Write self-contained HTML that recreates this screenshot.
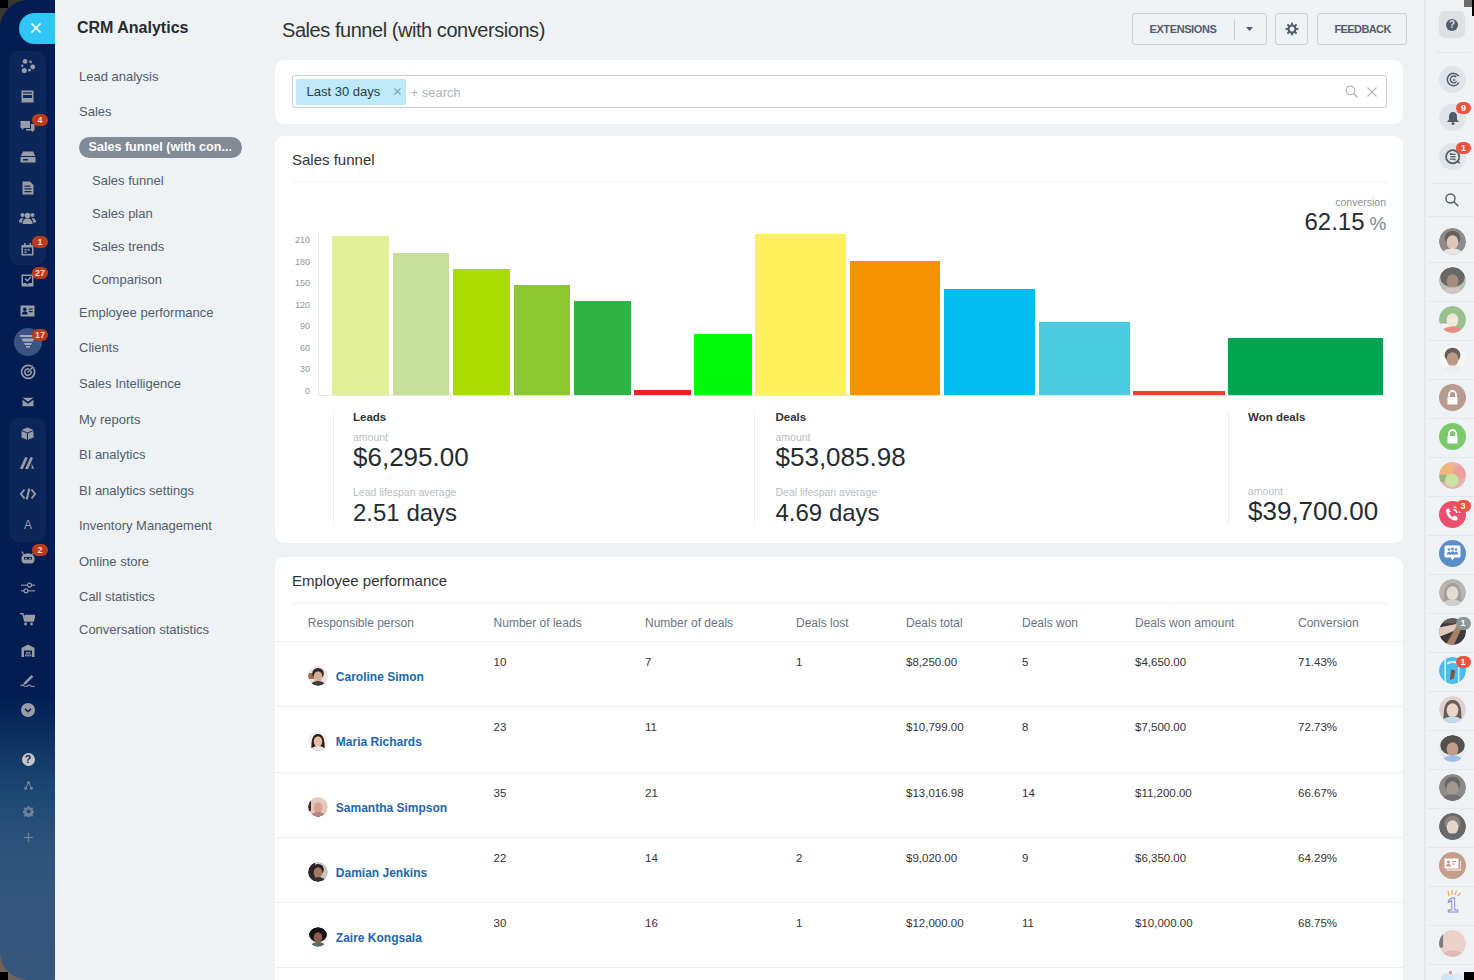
<!DOCTYPE html>
<html><head><meta charset="utf-8">
<style>
*{box-sizing:border-box;margin:0;padding:0}
html,body{width:1474px;height:980px;overflow:hidden;background:#eef2f4;font-family:"Liberation Sans",sans-serif;color:#333}
.a{position:absolute;white-space:nowrap}
.mi{position:absolute;left:79px;font-size:13px;color:#535c69;white-space:nowrap;line-height:15px}
.card{position:absolute;left:275px;width:1128px;background:#fff;border-radius:9px}
.badge{position:absolute;height:12px;min-width:15px;padding:0 3px;border-radius:6px;background:#bb3b1c;color:#f0d8cc;font-size:9px;font-weight:bold;line-height:12px;text-align:center}
.ic{position:absolute}
.th{position:absolute;top:616px;font-size:12px;color:#6a737f;line-height:14px;white-space:nowrap}
.td{position:absolute;font-size:11.5px;color:#333;line-height:14px;white-space:nowrap}
.nm{position:absolute;font-size:12px;font-weight:bold;color:#2067b0;line-height:14px;white-space:nowrap}
.av{position:absolute;border-radius:50%;overflow:hidden}
.rl{position:absolute;left:275px;width:1128px;height:1px;background:#edf0f2}
.yl{position:absolute;left:280px;width:30px;text-align:right;font-size:9px;color:#8f959c;line-height:10px}
.bar{position:absolute}
.ra{position:absolute;left:1439px;width:27px;height:27px;border-radius:50%;overflow:hidden}
.rd{position:absolute;left:1427.5px;width:46.5px;height:1px;background:#e3e7ea}
</style></head><body>

<div class="a" style="left:0;top:0;width:40px;height:40px;background:#3b3631"></div>
<div class="a" style="left:0;top:0;width:8px;height:8px;background:#000"></div>
<div class="a" style="left:0;top:940px;width:40px;height:40px;background:#6e6458"></div>
<div class="a" style="left:0;top:972px;width:8px;height:8px;background:#000"></div>
<div class="a" style="left:0;top:0;width:55px;height:980px;border-radius:28px 0 0 28px;background:linear-gradient(180deg,#031d52 0%,#031d52 71%,#0f3464 76%,#1c4874 81%,#2b527c 86%,#34557e 91%,#37567e 100%)"></div>
<div class="a" style="left:9px;top:51px;width:37px;height:214px;border-radius:11px;background:rgba(255,255,255,0.045)"></div>
<div class="a" style="left:9px;top:418px;width:37px;height:124px;border-radius:11px;background:rgba(255,255,255,0.045)"></div>
<div class="a" style="left:19px;top:13px;width:36px;height:31px;border-radius:16px 0 0 16px;background:#2fc6f6"></div>
<svg class="ic" style="left:30px;top:22px" width="12" height="12" viewBox="0 0 12 12"><path d="M1.5 1.5L10.5 10.5M10.5 1.5L1.5 10.5" stroke="#fff" stroke-width="1.6"/></svg>
<div class="a" style="left:13.5px;top:327.5px;width:28px;height:28px;border-radius:50%;background:#3b5382"></div>
<svg class="ic" style="left:19.5px;top:58px" width="16" height="16" viewBox="0 0 16 16" fill="#979ca6"><circle cx="5.1" cy="3.4" r="2.4"/><circle cx="12.7" cy="9" r="2.4"/><circle cx="4.3" cy="12.4" r="2.5"/><ellipse cx="10.5" cy="3.8" rx="1.5" ry="1.2" transform="rotate(35 10.5 3.8)"/><ellipse cx="2.3" cy="7.8" rx="1" ry="1.4"/><circle cx="9.4" cy="12.2" r="1.4"/></svg>
<svg class="ic" style="left:21.0px;top:89.5px" width="13" height="13" viewBox="0 0 13 13" fill="#979ca6" stroke="none"><path d="M0.5 0.5h12v12h-12z M2 2.2h9v1.4h-9z M2 5h9v3h-9z" fill-rule="evenodd"/></svg>
<svg class="ic" style="left:20.0px;top:120.0px" width="15" height="14" viewBox="0 0 15 14" fill="#979ca6" stroke="none"><path d="M0.5 1h9.5v7h-6l-2.2 2v-2h-1.3z"/><path d="M11 4h3.5v6.5h-1.2v2l-2.2-2h-5v-1.5h5z"/></svg>
<svg class="ic" style="left:19.5px;top:151.0px" width="16" height="12" viewBox="0 0 16 12" fill="#979ca6" stroke="none"><path d="M3 0.5h10l2.2 4.5h-14.4z"/><path d="M0.5 6h15v5.5h-15z M3 8h5v1.5h-5z" fill-rule="evenodd"/></svg>
<svg class="ic" style="left:21.5px;top:181.0px" width="12" height="14" viewBox="0 0 12 14" fill="#979ca6" stroke="none"><path d="M0.5 0.5h7.5l3.5 3.5v9.5h-11z M2.5 4.5h6v1.3h-6z M2.5 7.2h7v1.3h-7z M2.5 9.9h7v1.3h-7z" fill-rule="evenodd"/></svg>
<svg class="ic" style="left:19.0px;top:212.0px" width="17" height="12" viewBox="0 0 17 12" fill="#979ca6" stroke="none"><circle cx="8.5" cy="3.5" r="2.8"/><path d="M3.5 12c0-3.5 2-5.5 5-5.5s5 2 5 5.5z"/><circle cx="3.5" cy="3" r="2"/><path d="M0 10.5c0-3 1.3-4.5 3.5-4.5l1 0.3c-1 1-1.5 2.5-1.5 4.2z"/><circle cx="13.5" cy="3" r="2"/><path d="M17 10.5c0-3-1.3-4.5-3.5-4.5l-1 0.3c1 1 1.5 2.5 1.5 4.2z"/></svg>
<svg class="ic" style="left:21.0px;top:242.5px" width="13" height="13" viewBox="0 0 13 13" fill="#979ca6" stroke="none"><path d="M0.5 2h12v10.5h-12z M2 4.5h9v6.5h-9z" fill-rule="evenodd"/><rect x="3" y="0" width="1.5" height="3"/><rect x="8.5" y="0" width="1.5" height="3"/><rect x="3.5" y="6" width="2" height="1.5"/><rect x="6.5" y="6" width="2" height="1.5"/><rect x="3.5" y="8.5" width="2" height="1.5"/></svg>
<svg class="ic" style="left:21.0px;top:273.5px" width="13" height="13" viewBox="0 0 13 13" fill="#979ca6" stroke="none"><path d="M0.5 0.5h12v12h-12z M2 2h9v7h-3l-1.5 1.5l-1.5-1.5h-3z" fill-rule="evenodd"/><path d="M3.5 5l1 -1l1.8 1.8l3.2-3.2l1 1l-4.2 4.2z"/></svg>
<svg class="ic" style="left:20.0px;top:305.0px" width="15" height="12" viewBox="0 0 15 12" fill="#979ca6" stroke="none"><path d="M0.5 0.5h14v11h-14z"/><circle cx="4.8" cy="4.3" r="1.8" fill="#031d52"/><path d="M2 9.5c0-2.2 1.2-3.2 2.8-3.2s2.8 1 2.8 3.2z" fill="#031d52"/><rect x="8.8" y="3.5" width="3.8" height="1.2" fill="#031d52"/><rect x="8.8" y="6" width="3.8" height="1.2" fill="#031d52"/></svg>
<svg class="ic" style="left:19.5px;top:335px" width="16" height="13" viewBox="0 0 16 13" fill="#a3abbb"><rect x="0" y="0" width="16" height="2"/><path d="M1.5 3.5h13l-1.5 3h-10z"/><path d="M4 8h8l-1 2h-6z"/><rect x="6" y="11" width="4" height="1.6"/></svg>
<svg class="ic" style="left:19.5px;top:364.0px" width="16" height="16" viewBox="0 0 16 16" fill="#979ca6" stroke="none"><path d="M11.2 2.2A6.5 6.5 0 1 0 13.8 4.8" fill="none" stroke="#979ca6" stroke-width="1.7"/><path d="M9.2 5.1A3.2 3.2 0 1 0 10.9 6.8" fill="none" stroke="#979ca6" stroke-width="1.6"/><path d="M7.5 8.5l5.5-5.5" stroke="#979ca6" stroke-width="1.5"/><path d="M11.5 1l1 0l0.3 2.2l2.2 0.3v1l-2.5 0l-1-1z"/></svg>
<svg class="ic" style="left:21.5px;top:397.4px" width="12" height="10" viewBox="0 0 12 10" fill="#979ca6" stroke="none"><path d="M0.5 0.8h11l-5.5 4z"/><path d="M0.5 2.8l5.5 4l5.5-4v6.5h-11z"/></svg>
<svg class="ic" style="left:21.0px;top:426.5px" width="13" height="13" viewBox="0 0 13 13" fill="#979ca6" stroke="none"><path d="M6.5 0.5l6 2.5l-6 2.5l-6-2.5z"/><path d="M0.5 4l5.5 2.3v6.5l-5.5-2.3z"/><path d="M12.5 4l-5.5 2.3v6.5l5.5-2.3z"/></svg>
<svg class="ic" style="left:19.5px;top:457.0px" width="16" height="12" viewBox="0 0 16 12" fill="#979ca6" stroke="none"><path d="M1.5 11.5l4.5-10" stroke="#979ca6" stroke-width="2.8" stroke-linecap="round"/><path d="M6.8 11.5l4.5-10" stroke="#979ca6" stroke-width="2.8" stroke-linecap="round"/><path d="M11.6 6.5l2.6 5.2h-2.6z"/></svg>
<svg class="ic" style="left:19.5px;top:488.0px" width="16" height="12" viewBox="0 0 16 12" fill="#979ca6" stroke="none"><path d="M4.5 1.5l-3.6 4.5l3.6 4.5" stroke="#979ca6" stroke-width="2" fill="none"/><path d="M11.5 1.5l3.6 4.5l-3.6 4.5" stroke="#979ca6" stroke-width="2" fill="none"/><path d="M9.3 0.5l-2.6 11" stroke="#979ca6" stroke-width="2"/></svg>
<div class="a" style="left:21px;top:518px;width:14px;text-align:center;font-size:12px;color:#979ca6;line-height:14px">A</div>
<svg class="ic" style="left:19.5px;top:550.5px" width="16" height="13" viewBox="0 0 16 13" fill="#979ca6" stroke="none"><path d="M1.5 7.5c0-3.5 2.7-5 6.5-5s6.5 1.5 6.5 5v1.5c0 2-1.3 3.5-3.5 3.5h-6c-2.2 0-3.5-1.5-3.5-3.5z M4 6h8v2.6h-8z" fill-rule="evenodd"/><path d="M3.5 3.5l-1.5-3M12.5 3.5l1.5-3" stroke="#979ca6" stroke-width="1.2"/><circle cx="6" cy="7.3" r="0.9"/><circle cx="10" cy="7.3" r="0.9"/></svg>
<svg class="ic" style="left:20.5px;top:582.0px" width="14" height="12" viewBox="0 0 14 12" fill="#979ca6" stroke="none"><rect x="0" y="2.6" width="14" height="1.1"/><rect x="0" y="8.3" width="14" height="1.1"/><circle cx="8.5" cy="3.1" r="2" fill="#031d52" stroke="#979ca6" stroke-width="1.2"/><circle cx="5" cy="8.8" r="2" fill="#031d52" stroke="#979ca6" stroke-width="1.2"/></svg>
<svg class="ic" style="left:20.0px;top:612.5px" width="15" height="13" viewBox="0 0 15 13" fill="#979ca6" stroke="none"><path d="M0 0.5h2.8l2 7.5h8.5l1.5-5.5h-10" fill="none" stroke="#979ca6" stroke-width="1.4"/><path d="M4 2.5h10.5l-1.5 5.5h-8.5z"/><circle cx="5.5" cy="11" r="1.4"/><circle cx="11.5" cy="11" r="1.4"/></svg>
<svg class="ic" style="left:20.5px;top:643.5px" width="14" height="13" viewBox="0 0 14 13" fill="#979ca6" stroke="none"><path d="M7 0.5l6.5 3.5v9h-2.5v-6.5h-8v6.5h-2.5v-9z"/><rect x="5" y="8" width="1.8" height="1.8"/><rect x="7.5" y="8" width="1.8" height="1.8"/><rect x="6.2" y="10.5" width="1.8" height="1.8"/><rect x="4" y="10.5" width="1.8" height="1.8"/><rect x="8.5" y="10.5" width="1.8" height="1.8"/></svg>
<svg class="ic" style="left:20.0px;top:673.0px" width="15" height="14" viewBox="0 0 15 14" fill="#979ca6" stroke="none"><path d="M4 9.5l7.5-7.5l1.8 1.8l-7.5 7.5l-2.5 0.7z"/><path d="M0.5 13c1.5-1.5 2.5-1.5 3.5 0s2 1.5 3.5 0s2-1.5 3.5 0s2 1 3.5 0" stroke="#979ca6" stroke-width="1.1" fill="none"/></svg>
<svg class="ic" style="left:20.5px;top:703.0px" width="14" height="14" viewBox="0 0 14 14" fill="#979ca6" stroke="none"><circle cx="7" cy="7" r="7"/><path d="M4 5.8l3 3l3-3" stroke="#031d52" stroke-width="1.5" fill="none"/></svg>
<svg class="ic" style="left:21.5px;top:752.5px" width="13" height="13" viewBox="0 0 13 13"><circle cx="6.5" cy="6.5" r="6.5" fill="#c3c5cb"/></svg>
<div class="a" style="left:21.5px;top:753px;width:13px;text-align:center;font-size:10.5px;font-weight:bold;color:#10284f;line-height:12px">?</div>
<svg class="ic" style="left:23.5px;top:781px;opacity:0.75" width="9" height="9" viewBox="0 0 9 9" fill="#979ca6"><circle cx="4.5" cy="1.6" r="1.5"/><circle cx="1.6" cy="7.2" r="1.5"/><circle cx="7.4" cy="7.2" r="1.5"/><path d="M4.5 1.6l-2.9 5.6M4.5 1.6l2.9 5.6" stroke="#979ca6" stroke-width="0.9"/></svg>
<svg class="ic" style="left:22.5px;top:805.5px;opacity:0.65" width="11" height="11" viewBox="0 0 13 13" fill="#979ca6"><path fill-rule="evenodd" d="M5.5 0h2l0.4 1.8l1.3 0.6l1.6-1l1.4 1.4l-1 1.6l0.6 1.3l1.8 0.4v2l-1.8 0.4l-0.6 1.3l1 1.6l-1.4 1.4l-1.6-1l-1.3 0.6l-0.4 1.8h-2l-0.4-1.8l-1.3-0.6l-1.6 1l-1.4-1.4l1-1.6l-0.6-1.3l-1.8-0.4v-2l1.8-0.4l0.6-1.3l-1-1.6l1.4-1.4l1.6 1l1.3-0.6z M6.5 4a2.5 2.5 0 1 0 0.01 0z"/></svg>
<svg class="ic" style="left:23.5px;top:832.5px;opacity:0.65" width="9" height="9" viewBox="0 0 9 9" fill="#979ca6"><rect x="3.85" y="0" width="1.3" height="9"/><rect x="0" y="3.85" width="9" height="1.3"/></svg>
<div class="badge" style="left:32px;top:114px;width:16px">4</div>
<div class="badge" style="left:32px;top:236px;width:16px">1</div>
<div class="badge" style="left:32px;top:267px;width:16px">27</div>
<div class="badge" style="left:32px;top:329px;width:16px">17</div>
<div class="badge" style="left:32px;top:544px;width:16px">2</div>
<div class="a" style="left:77px;top:18px;font-size:16px;font-weight:bold;color:#262b30;line-height:20px">CRM Analytics</div>
<div class="mi" style="left:79px;top:69px">Lead analysis</div>
<div class="mi" style="left:79px;top:104px">Sales</div>
<div class="mi" style="left:92px;top:173px">Sales funnel</div>
<div class="mi" style="left:92px;top:206px">Sales plan</div>
<div class="mi" style="left:92px;top:239px">Sales trends</div>
<div class="mi" style="left:92px;top:272px">Comparison</div>
<div class="mi" style="left:79px;top:305px">Employee performance</div>
<div class="mi" style="left:79px;top:340.4px">Clients</div>
<div class="mi" style="left:79px;top:376.2px">Sales Intelligence</div>
<div class="mi" style="left:79px;top:411.7px">My reports</div>
<div class="mi" style="left:79px;top:446.9px">BI analytics</div>
<div class="mi" style="left:79px;top:482.8px">BI analytics settings</div>
<div class="mi" style="left:79px;top:518.3px">Inventory Management</div>
<div class="mi" style="left:79px;top:553.8px">Online store</div>
<div class="mi" style="left:79px;top:589.3px">Call statistics</div>
<div class="mi" style="left:79px;top:622.4px">Conversation statistics</div>
<div class="a" style="left:79px;top:136.5px;width:163px;height:21.5px;border-radius:11px;background:#828a96"></div>
<div class="a" style="left:88.5px;top:140px;font-size:12.6px;font-weight:bold;color:#fff;line-height:15px">Sales funnel (with con...</div>
<div class="a" style="left:282px;top:18px;font-size:20px;letter-spacing:-0.45px;color:#333;line-height:24px">Sales funnel (with conversions)</div>
<div style="position:absolute;border:1px solid #cbd0d4;border-radius:3px;height:32px;top:13px;left:1131.5px;width:135px"></div>
<div class="a" style="left:1234px;top:19.5px;width:1px;height:20px;background:#c6cdd3"></div>
<svg class="ic" style="left:1246px;top:27px" width="7" height="4" viewBox="0 0 7 4"><path d="M0 0h7l-3.5 4z" fill="#535c69"/></svg>
<div class="a" style="left:1149.5px;top:23px;font-size:11px;font-weight:bold;letter-spacing:-0.4px;color:#535c69;line-height:12px">EXTENSIONS</div>
<div style="position:absolute;border:1px solid #cbd0d4;border-radius:3px;height:32px;top:13px;left:1275px;width:32.5px"></div>
<svg class="ic" style="left:1284.5px;top:22px" width="14" height="14" viewBox="0 0 14 14"><path fill="#535c69" fill-rule="evenodd" d="M6.00 2.51 L6.21 0.45 L7.79 0.45 L8.00 2.51 L9.46 3.12 L11.07 1.81 L12.19 2.93 L10.88 4.54 L11.49 6.00 L13.55 6.21 L13.55 7.79 L11.49 8.00 L10.88 9.46 L12.19 11.07 L11.07 12.19 L9.46 10.88 L8.00 11.49 L7.79 13.55 L6.21 13.55 L6.00 11.49 L4.54 10.88 L2.93 12.19 L1.81 11.07 L3.12 9.46 L2.51 8.00 L0.45 7.79 L0.45 6.21 L2.51 6.00 L3.12 4.54 L1.81 2.93 L2.93 1.81 L4.54 3.12Z M7 4.6 A2.4 2.4 0 1 0 7.01 4.6Z"/></svg>
<div style="position:absolute;border:1px solid #cbd0d4;border-radius:3px;height:32px;top:13px;left:1316.5px;width:90.5px"></div>
<div class="a" style="left:1334.5px;top:23px;font-size:11px;font-weight:bold;letter-spacing:-0.6px;color:#535c69;line-height:12px">FEEDBACK</div>
<div class="card" style="top:60px;height:64px"></div>
<div class="a" style="left:291.5px;top:75px;width:1095px;height:33px;border:1px solid #c9cccf;border-radius:3px;background:#fff"></div>
<div class="a" style="left:295.5px;top:79px;width:110.5px;height:26px;border-radius:2px;background:#bde9f8"></div>
<div class="a" style="left:306.5px;top:84px;font-size:13px;color:#2e3a48;line-height:15px">Last 30 days</div>
<svg class="ic" style="left:393.5px;top:88px" width="7" height="7" viewBox="0 0 7 7"><path d="M0.5 0.5l6 6M6.5 0.5l-6 6" stroke="#87a9b6" stroke-width="1.3"/></svg>
<div class="a" style="left:410.5px;top:84.5px;font-size:13px;color:#b0b5bb;line-height:15px">+ search</div>
<svg class="ic" style="left:1344.5px;top:84.5px" width="14" height="14" viewBox="0 0 14 14"><circle cx="5.4" cy="5.4" r="4.3" fill="none" stroke="#b3b6b9" stroke-width="1.2"/><path d="M8.5 8.5l3.8 3.8" stroke="#b3b6b9" stroke-width="1.4"/></svg>
<svg class="ic" style="left:1366.5px;top:87px" width="10" height="10" viewBox="0 0 10 10"><path d="M0.5 0.5l9 9M9.5 0.5l-9 9" stroke="#b3b6b9" stroke-width="1.2"/></svg>
<div class="card" style="top:136px;height:407px"></div>
<div class="a" style="left:292px;top:151px;font-size:15px;color:#333;line-height:18px">Sales funnel</div>
<div class="a" style="left:292px;top:182px;width:1095px;height:1px;background:#eef0f2"></div>
<div class="a" style="left:1285px;top:195.5px;width:101px;text-align:right;font-size:10.5px;color:#8a9097;line-height:13px">conversion</div>
<div class="a" style="left:1304.5px;top:207.5px;font-size:24px;color:#262b30;line-height:28px">62.15<span style="font-size:19px;color:#80868e;margin-left:5px">%</span></div>
<div class="yl" style="top:235.0px">210</div>
<div class="yl" style="top:256.57px">180</div>
<div class="yl" style="top:278.14px">150</div>
<div class="yl" style="top:299.71000000000004px">120</div>
<div class="yl" style="top:321.28px">90</div>
<div class="yl" style="top:342.85px">60</div>
<div class="yl" style="top:364.42px">30</div>
<div class="yl" style="top:385.99px">0</div>
<div class="a" style="left:317.5px;top:234px;width:1px;height:161px;background:#e3e6e9"></div>
<div class="a" style="left:317.5px;top:394.5px;width:1069px;height:1px;background:#e3e6e9"></div>
<div class="bar" style="left:332.4px;top:236px;width:56.80000000000001px;height:159px;background:#e1ef99"></div>
<div class="bar" style="left:393.4px;top:253px;width:56.0px;height:142px;background:#c6df9b"></div>
<div class="bar" style="left:452.9px;top:268.5px;width:57.200000000000045px;height:126.5px;background:#a9dd00"></div>
<div class="bar" style="left:513.6px;top:285px;width:56.69999999999993px;height:110px;background:#8cc631"></div>
<div class="bar" style="left:573.6px;top:300.8px;width:57.0px;height:94.19999999999999px;background:#2fb344"></div>
<div class="bar" style="left:634.3px;top:390.2px;width:56.40000000000009px;height:4.800000000000011px;background:#e3251f"></div>
<div class="bar" style="left:694.3px;top:334.2px;width:57.40000000000009px;height:60.80000000000001px;background:#00f90c"></div>
<div class="bar" style="left:754.8px;top:234.2px;width:91.70000000000005px;height:160.8px;background:#fdf05c"></div>
<div class="bar" style="left:849.7px;top:261.1px;width:90.79999999999995px;height:133.89999999999998px;background:#f59400"></div>
<div class="bar" style="left:944.2px;top:289px;width:91.09999999999991px;height:106px;background:#00bcf3"></div>
<div class="bar" style="left:1039px;top:321.8px;width:91px;height:73.19999999999999px;background:#48cde0"></div>
<div class="bar" style="left:1133.1px;top:391px;width:91.80000000000018px;height:4px;background:#e8462b"></div>
<div class="bar" style="left:1228px;top:337.6px;width:154.70000000000005px;height:57.39999999999998px;background:#00a550"></div>
<div class="a" style="left:332.6px;top:410px;width:1px;height:116px;background:#eceef0"></div>
<div class="a" style="left:754.3px;top:410px;width:1px;height:116px;background:#eceef0"></div>
<div class="a" style="left:1228px;top:410px;width:1px;height:116px;background:#eceef0"></div>
<div class="a" style="left:353px;top:410px;font-size:11.5px;font-weight:bold;color:#333;line-height:14px">Leads</div>
<div class="a" style="left:353px;top:431px;font-size:10.5px;color:#b9bec3;line-height:12px">amount</div>
<div class="a" style="left:353px;top:442px;font-size:26px;color:#262b30;line-height:30px">$6,295.00</div>
<div class="a" style="left:353px;top:486px;font-size:10.5px;color:#b9bec3;line-height:12px">Lead lifespan average</div>
<div class="a" style="left:353px;top:499px;font-size:24px;color:#262b30;line-height:28px">2.51 days</div>
<div class="a" style="left:775.5px;top:410px;font-size:11.5px;font-weight:bold;color:#333;line-height:14px">Deals</div>
<div class="a" style="left:775.5px;top:431px;font-size:10.5px;color:#b9bec3;line-height:12px">amount</div>
<div class="a" style="left:775.5px;top:442px;font-size:26px;color:#262b30;line-height:30px">$53,085.98</div>
<div class="a" style="left:775.5px;top:486px;font-size:10.5px;color:#b9bec3;line-height:12px">Deal lifespan average</div>
<div class="a" style="left:775.5px;top:499px;font-size:24px;color:#262b30;line-height:28px">4.69 days</div>
<div class="a" style="left:1248px;top:410px;font-size:11.5px;font-weight:bold;color:#333;line-height:14px">Won deals</div>
<div class="a" style="left:1248px;top:485px;font-size:10.5px;color:#b9bec3;line-height:12px">amount</div>
<div class="a" style="left:1248px;top:496px;font-size:26px;color:#262b30;line-height:30px">$39,700.00</div>
<div class="card" style="top:557px;height:440px"></div>
<div class="a" style="left:292px;top:572px;font-size:15px;color:#333;line-height:18px">Employee performance</div>
<div class="a" style="left:292px;top:602.5px;width:1095px;height:1px;background:#eef0f2"></div>
<div class="th" style="left:307.8px">Responsible person</div>
<div class="th" style="left:493.6px">Number of leads</div>
<div class="th" style="left:645px">Number of deals</div>
<div class="th" style="left:796px">Deals lost</div>
<div class="th" style="left:906px">Deals total</div>
<div class="th" style="left:1022px">Deals won</div>
<div class="th" style="left:1135px">Deals won amount</div>
<div class="th" style="left:1298px">Conversion</div>
<div class="rl" style="top:641.2px"></div>
<div class="av" style="left:308px;top:666.2px;width:20px;height:20px"><svg width="20" height="20" viewBox="0 0 20 20" style="display:block;opacity:1"><defs><clipPath id="c1"><circle cx="10" cy="10" r="10"/></clipPath></defs><g clip-path="url(#c1)"><rect width="20" height="20" fill="#e9e4e0"/><rect x="0" y="7" width="6" height="6" fill="#a86a45"/><rect x="8.5" y="15" width="3" height="5" fill="#eee"/><ellipse cx="10" cy="7.5" rx="5.8" ry="5.5" fill="#2f2622"/><ellipse cx="10" cy="10.5" rx="4.3" ry="5.2" fill="#d8ae94"/><ellipse cx="10" cy="21.5" rx="9" ry="6.5" fill="#3b3b3b"/></g></svg></div>
<div class="nm" style="left:335.8px;top:670.2px">Caroline Simon</div>
<div class="td" style="left:493.6px;top:655.2px">10</div>
<div class="td" style="left:645px;top:655.2px">7</div>
<div class="td" style="left:796px;top:655.2px">1</div>
<div class="td" style="left:906px;top:655.2px">$8,250.00</div>
<div class="td" style="left:1022px;top:655.2px">5</div>
<div class="td" style="left:1135px;top:655.2px">$4,650.00</div>
<div class="td" style="left:1298px;top:655.2px">71.43%</div>
<div class="rl" style="top:706.4000000000001px"></div>
<div class="av" style="left:308px;top:731.4000000000001px;width:20px;height:20px"><svg width="20" height="20" viewBox="0 0 20 20" style="display:block;opacity:1"><defs><clipPath id="c2"><circle cx="10" cy="10" r="10"/></clipPath></defs><g clip-path="url(#c2)"><rect width="20" height="20" fill="#f3efed"/><path d="M3.5 20 C3 10 4 3 10 3 C16 3 17 10 16.5 20z" fill="#2a1c17"/><ellipse cx="10" cy="10.5" rx="4.3" ry="5.2" fill="#e2bca6"/><ellipse cx="10" cy="21.5" rx="9" ry="6.5" fill="#ece8e4"/></g></svg></div>
<div class="nm" style="left:335.8px;top:735.4000000000001px">Maria Richards</div>
<div class="td" style="left:493.6px;top:720.4000000000001px">23</div>
<div class="td" style="left:645px;top:720.4000000000001px">11</div>
<div class="td" style="left:906px;top:720.4000000000001px">$10,799.00</div>
<div class="td" style="left:1022px;top:720.4000000000001px">8</div>
<div class="td" style="left:1135px;top:720.4000000000001px">$7,500.00</div>
<div class="td" style="left:1298px;top:720.4000000000001px">72.73%</div>
<div class="rl" style="top:771.6000000000001px"></div>
<div class="av" style="left:308px;top:796.6px;width:20px;height:20px"><svg width="20" height="20" viewBox="0 0 20 20" style="display:block;opacity:1"><defs><clipPath id="c3"><circle cx="10" cy="10" r="10"/></clipPath></defs><g clip-path="url(#c3)"><rect width="20" height="20" fill="#e7c6bd"/><rect x="0" y="4" width="3" height="10" fill="#3a2d2a"/><rect x="8" y="15" width="4" height="5" fill="#2a1d1a"/><ellipse cx="10" cy="10.5" rx="4.3" ry="5.2" fill="#d9a191"/><ellipse cx="10" cy="21.5" rx="9" ry="6.5" fill="#b9857a"/></g></svg></div>
<div class="nm" style="left:335.8px;top:800.6px">Samantha Simpson</div>
<div class="td" style="left:493.6px;top:785.6px">35</div>
<div class="td" style="left:645px;top:785.6px">21</div>
<div class="td" style="left:906px;top:785.6px">$13,016.98</div>
<div class="td" style="left:1022px;top:785.6px">14</div>
<div class="td" style="left:1135px;top:785.6px">$11,200.00</div>
<div class="td" style="left:1298px;top:785.6px">66.67%</div>
<div class="rl" style="top:836.8000000000001px"></div>
<div class="av" style="left:308px;top:861.8000000000001px;width:20px;height:20px"><svg width="20" height="20" viewBox="0 0 20 20" style="display:block;opacity:1"><defs><clipPath id="c4"><circle cx="10" cy="10" r="10"/></clipPath></defs><g clip-path="url(#c4)"><rect width="20" height="20" fill="#c9c5c2"/><rect x="0" y="0" width="7" height="20" fill="#2e2626"/><ellipse cx="10" cy="7.5" rx="5.8" ry="5.5" fill="#2a201e"/><ellipse cx="10" cy="10.5" rx="4.3" ry="5.2" fill="#a37862"/><ellipse cx="10" cy="21.5" rx="9" ry="6.5" fill="#3a2e2c"/></g></svg></div>
<div class="nm" style="left:335.8px;top:865.8000000000001px">Damian Jenkins</div>
<div class="td" style="left:493.6px;top:850.8000000000001px">22</div>
<div class="td" style="left:645px;top:850.8000000000001px">14</div>
<div class="td" style="left:796px;top:850.8000000000001px">2</div>
<div class="td" style="left:906px;top:850.8000000000001px">$9,020.00</div>
<div class="td" style="left:1022px;top:850.8000000000001px">9</div>
<div class="td" style="left:1135px;top:850.8000000000001px">$6,350.00</div>
<div class="td" style="left:1298px;top:850.8000000000001px">64.29%</div>
<div class="rl" style="top:902.0000000000001px"></div>
<div class="av" style="left:308px;top:927.0px;width:20px;height:20px"><svg width="20" height="20" viewBox="0 0 20 20" style="display:block;opacity:1"><defs><clipPath id="c5"><circle cx="10" cy="10" r="10"/></clipPath></defs><g clip-path="url(#c5)"><rect width="20" height="20" fill="#f2f2f2"/><ellipse cx="10" cy="7.5" rx="9" ry="7.5" fill="#161313"/><ellipse cx="10" cy="10.5" rx="4.3" ry="5.2" fill="#8a5f4c"/><ellipse cx="10" cy="21.5" rx="9" ry="6.5" fill="#5a6a62"/></g></svg></div>
<div class="nm" style="left:335.8px;top:931.0px">Zaire Kongsala</div>
<div class="td" style="left:493.6px;top:916.0px">30</div>
<div class="td" style="left:645px;top:916.0px">16</div>
<div class="td" style="left:796px;top:916.0px">1</div>
<div class="td" style="left:906px;top:916.0px">$12,000.00</div>
<div class="td" style="left:1022px;top:916.0px">11</div>
<div class="td" style="left:1135px;top:916.0px">$10,000.00</div>
<div class="td" style="left:1298px;top:916.0px">68.75%</div>
<div class="rl" style="top:967.2px"></div>
<div class="a" style="left:1425.5px;top:0;width:48.5px;height:980px;background:#eff2f4"></div>
<div class="a" style="left:1423.5px;top:0;width:2px;height:980px;background:#e4e8eb"></div>
<div class="a" style="left:1439px;top:11px;width:26px;height:27px;border-radius:6px;background:#dde1e6"></div>
<svg class="ic" style="left:1446px;top:18.5px" width="12" height="12" viewBox="0 0 12 12"><circle cx="6" cy="6" r="6" fill="#535c69"/></svg>
<div class="a" style="left:1446px;top:18.5px;width:12px;text-align:center;font-size:10px;font-weight:bold;color:#dde1e6;line-height:12px">?</div>
<div class="rd" style="top:51.5px;left:1436px;width:34px"></div>
<div class="a" style="left:1439px;top:65.5px;width:27px;height:27px;border-radius:50%;background:#e1e5e9"></div>
<div class="a" style="left:1439px;top:104.0px;width:27px;height:27px;border-radius:50%;background:#e1e5e9"></div>
<div class="a" style="left:1439px;top:143.0px;width:27px;height:27px;border-radius:50%;background:#e1e5e9"></div>
<svg class="ic" style="left:1445.5px;top:71.5px" width="15" height="15" viewBox="0 0 15 15"><path d="M13 10.5A6.2 6.2 0 1 1 12.6 4" fill="none" stroke="#535c69" stroke-width="1.5"/><path d="M10.3 5.2A3.4 3.4 0 1 0 10.6 9.3" fill="none" stroke="#535c69" stroke-width="1.4"/><path d="M8 6.2l0.5 1.2l1.2 0.5l-1.2 0.5l-0.5 1.2l-0.5-1.2l-1.2-0.5l1.2-0.5z" fill="#535c69"/></svg>
<svg class="ic" style="left:1446px;top:110.5px" width="14" height="14" viewBox="0 0 14 14"><path d="M7 1c-2.5 0-4 2-4 4.5v3l-2 2.5h12l-2-2.5v-3c0-2.5-1.5-4.5-4-4.5z" fill="#535c69"/><circle cx="7" cy="12.5" r="1.5" fill="#535c69"/></svg>
<svg class="ic" style="left:1443.5px;top:147.5px" width="18" height="18" viewBox="0 0 18 18"><circle cx="8.7" cy="8.7" r="6.6" fill="none" stroke="#535c69" stroke-width="1.7"/><path d="M13 13.3l2.8 1.6" stroke="#535c69" stroke-width="1.7"/><path d="M6 6.3h5.5M6 6.3l1.3-1.2M6.5 8.7h5M11.5 11.1h-5.5M11.5 11.1l-1.3 1.2" fill="none" stroke="#535c69" stroke-width="1.2"/></svg>
<div class="badge" style="left:1456px;top:102px;width:15px;background:#f0523f;color:#fff">9</div>
<div class="badge" style="left:1456px;top:142px;width:15px;background:#f0523f;color:#fff">1</div>
<div class="rd" style="top:183px;left:1432px;width:40px"></div>
<svg class="ic" style="left:1445px;top:192.5px" width="14" height="14" viewBox="0 0 14 14"><circle cx="5.5" cy="5.5" r="4.5" fill="none" stroke="#535c69" stroke-width="1.4"/><path d="M8.8 8.8l4.5 4.5" stroke="#535c69" stroke-width="1.6"/></svg>
<div class="rd" style="top:215.5px"></div>
<div class="ra" style="top:228.0px"><svg width="27" height="27" viewBox="0 0 20 20" style="display:block;opacity:0.75"><defs><clipPath id="c6"><circle cx="10" cy="10" r="10"/></clipPath></defs><g clip-path="url(#c6)"><rect width="20" height="20" fill="#6e6a66"/><ellipse cx="10" cy="7.5" rx="5.8" ry="5.5" fill="#3a302b"/><ellipse cx="10" cy="10.5" rx="4.3" ry="5.2" fill="#d9b9a5"/><ellipse cx="10" cy="21.5" rx="9" ry="6.5" fill="#e6e1dc"/></g></svg></div>
<div class="rd" style="top:261.8px"></div>
<div class="ra" style="top:267.0px"><svg width="27" height="27" viewBox="0 0 20 20" style="display:block;opacity:0.75"><defs><clipPath id="c7"><circle cx="10" cy="10" r="10"/></clipPath></defs><g clip-path="url(#c7)"><rect width="20" height="20" fill="#a9b0a8"/><ellipse cx="10" cy="7.5" rx="9" ry="7.5" fill="#3e3a38"/><ellipse cx="10" cy="10.5" rx="4.3" ry="5.2" fill="#8c6a5a"/><ellipse cx="10" cy="21.5" rx="9" ry="6.5" fill="#c9b5b5"/></g></svg></div>
<div class="rd" style="top:300.8px"></div>
<div class="ra" style="top:306.0px"><svg width="27" height="27" viewBox="0 0 20 20" style="display:block;opacity:0.75"><defs><clipPath id="c8"><circle cx="10" cy="10" r="10"/></clipPath></defs><g clip-path="url(#c8)"><rect width="20" height="20" fill="#7fae6a"/><rect x="0" y="13" width="9" height="7" fill="#f4f4f4"/><ellipse cx="10" cy="10.5" rx="4.3" ry="5.2" fill="#efe4d2"/><ellipse cx="10" cy="21.5" rx="9" ry="6.5" fill="#e56d5e"/></g></svg></div>
<div class="rd" style="top:339.8px"></div>
<div class="ra" style="top:345.0px"><svg width="27" height="27" viewBox="0 0 20 20" style="display:block;opacity:0.75"><defs><clipPath id="c9"><circle cx="10" cy="10" r="10"/></clipPath></defs><g clip-path="url(#c9)"><rect width="20" height="20" fill="#f7f7f7"/><rect x="9.2" y="15" width="1.6" height="5" fill="#2a3240"/><ellipse cx="10" cy="7.5" rx="5.8" ry="5.5" fill="#3b2e28"/><ellipse cx="10" cy="10.5" rx="4.3" ry="5.2" fill="#a97c62"/><ellipse cx="10" cy="21.5" rx="9" ry="6.5" fill="#e8ecef"/></g></svg></div>
<div class="rd" style="top:378.8px"></div>
<div class="ra" style="top:384.0px;background:#b89a8f"></div>
<div class="rd" style="top:417.8px"></div>
<div class="ra" style="top:423.0px;background:#7cc96b"></div>
<div class="rd" style="top:456.8px"></div>
<div class="ra" style="top:462.0px"><svg width="27" height="27" viewBox="0 0 20 20" style="display:block;opacity:0.8"><defs><clipPath id="c10"><circle cx="10" cy="10" r="10"/></clipPath></defs><g clip-path="url(#c10)"><rect width="20" height="20" fill="#e7a0a0"/><circle cx="6" cy="6" r="6" fill="#f0a860"/><circle cx="15" cy="8" r="5" fill="#eb8d8d"/><circle cx="3" cy="12" r="3" fill="#8aa46a"/><circle cx="9.5" cy="13.5" r="5" fill="#c2dc8a"/></g></svg></div>
<div class="rd" style="top:495.8px"></div>
<div class="ra" style="top:501.0px;background:#e9506e"></div>
<div class="rd" style="top:534.8px"></div>
<div class="ra" style="top:540.0px;background:#5b8ec9"></div>
<div class="rd" style="top:573.8px"></div>
<div class="ra" style="top:579.0px"><svg width="27" height="27" viewBox="0 0 20 20" style="display:block;opacity:0.75"><defs><clipPath id="c11"><circle cx="10" cy="10" r="10"/></clipPath></defs><g clip-path="url(#c11)"><rect width="20" height="20" fill="#a7a29c"/><path d="M3.5 20 C3 10 4 3 10 3 C16 3 17 10 16.5 20z" fill="#8a847d"/><ellipse cx="10" cy="10.5" rx="4.3" ry="5.2" fill="#ddd3c8"/><ellipse cx="10" cy="21.5" rx="9" ry="6.5" fill="#c9c2ba"/></g></svg></div>
<div class="rd" style="top:612.8px"></div>
<div class="ra" style="top:618.0px"><svg width="27" height="27" viewBox="0 0 20 20" style="display:block;opacity:0.85"><defs><clipPath id="c12"><circle cx="10" cy="10" r="10"/></clipPath></defs><g clip-path="url(#c12)"><rect width="20" height="20" fill="#1e1a18"/><path d="M0 7l20-4v3l-20 8z" fill="#d8c3b3"/><path d="M5 20l8-14l4 1l-6 13z" fill="#9a6a50"/><rect x="0" y="0" width="20" height="4" fill="#4a4440"/></g></svg></div>
<div class="rd" style="top:651.8px"></div>
<div class="ra" style="top:657.0px"><svg width="27" height="27" viewBox="0 0 20 20" style="display:block;opacity:0.85"><defs><clipPath id="c13"><circle cx="10" cy="10" r="10"/></clipPath></defs><g clip-path="url(#c13)"><rect width="20" height="20" fill="#2bb5ec"/><rect x="4" y="0" width="1.2" height="20" fill="#c9ecfa"/><rect x="14" y="6" width="1.2" height="14" fill="#c9ecfa"/><path d="M6 5q4-3 8 0" fill="none" stroke="#e8f6fc" stroke-width="1.5"/><path d="M9 9l3 1l-1 6l-3 1z" fill="#6a3a2a"/></g></svg></div>
<div class="rd" style="top:690.8px"></div>
<div class="ra" style="top:696.0px"><svg width="27" height="27" viewBox="0 0 20 20" style="display:block;opacity:0.75"><defs><clipPath id="c14"><circle cx="10" cy="10" r="10"/></clipPath></defs><g clip-path="url(#c14)"><rect width="20" height="20" fill="#d9c6c6"/><path d="M3.5 20 C3 10 4 3 10 3 C16 3 17 10 16.5 20z" fill="#3b2a25"/><ellipse cx="10" cy="10.5" rx="4.3" ry="5.2" fill="#e9cbb9"/><ellipse cx="10" cy="21.5" rx="9" ry="6.5" fill="#b9cfe6"/></g></svg></div>
<div class="rd" style="top:729.8px"></div>
<div class="ra" style="top:735.0px"><svg width="27" height="27" viewBox="0 0 20 20" style="display:block;opacity:0.75"><defs><clipPath id="c15"><circle cx="10" cy="10" r="10"/></clipPath></defs><g clip-path="url(#c15)"><rect width="20" height="20" fill="#e3e6e8"/><ellipse cx="10" cy="7.5" rx="9" ry="7.5" fill="#221b18"/><ellipse cx="10" cy="10.5" rx="4.3" ry="5.2" fill="#b08068"/><ellipse cx="10" cy="21.5" rx="9" ry="6.5" fill="#86aee0"/></g></svg></div>
<div class="rd" style="top:768.8px"></div>
<div class="ra" style="top:774.0px"><svg width="27" height="27" viewBox="0 0 20 20" style="display:block;opacity:0.75"><defs><clipPath id="c16"><circle cx="10" cy="10" r="10"/></clipPath></defs><g clip-path="url(#c16)"><rect width="20" height="20" fill="#6b6864"/><ellipse cx="10" cy="7.5" rx="5.8" ry="5.5" fill="#3d3a37"/><ellipse cx="10" cy="10.5" rx="4.3" ry="5.2" fill="#8a7a70"/><ellipse cx="10" cy="21.5" rx="9" ry="6.5" fill="#4a4643"/></g></svg></div>
<div class="rd" style="top:807.8px"></div>
<div class="ra" style="top:813.0px"><svg width="27" height="27" viewBox="0 0 20 20" style="display:block;opacity:0.75"><defs><clipPath id="c17"><circle cx="10" cy="10" r="10"/></clipPath></defs><g clip-path="url(#c17)"><rect width="20" height="20" fill="#3e3a38"/><rect x="5" y="9" width="10" height="1.3" fill="#222"/><ellipse cx="10" cy="7.5" rx="5.8" ry="5.5" fill="#6b625c"/><ellipse cx="10" cy="10.5" rx="4.3" ry="5.2" fill="#e0ccbc"/><ellipse cx="10" cy="21.5" rx="9" ry="6.5" fill="#3a3f4a"/></g></svg></div>
<div class="rd" style="top:846.8px"></div>
<div class="ra" style="top:852.0px;background:#c59d8c"></div>
<div class="rd" style="top:885.8px"></div>
<div class="ra" style="top:891.0px;background:#eff2f4"></div>
<div class="rd" style="top:924.8px"></div>
<div class="ra" style="top:930.0px"><svg width="27" height="27" viewBox="0 0 20 20" style="display:block;opacity:0.75"><defs><clipPath id="c18"><circle cx="10" cy="10" r="10"/></clipPath></defs><g clip-path="url(#c18)"><rect width="20" height="20" fill="#e8c7bd"/><rect x="0" y="3" width="3" height="10" fill="#555"/><ellipse cx="10" cy="10.5" rx="4.3" ry="5.2" fill="#ecc9bb"/><ellipse cx="10" cy="21.5" rx="9" ry="6.5" fill="#d9a7a0"/></g></svg></div>
<div class="rd" style="top:963.8px"></div>
<svg class="ic" style="left:1445.5px;top:389.5px" width="13" height="15" viewBox="0 0 13 15"><path d="M3 7v-2.5a3.5 3.5 0 0 1 7 0v2.5" fill="none" stroke="#fff" stroke-width="1.8"/><rect x="1.5" y="7" width="10" height="7.5" fill="#fff"/></svg>
<svg class="ic" style="left:1445.5px;top:428.5px" width="13" height="15" viewBox="0 0 13 15"><path d="M3 7v-2.5a3.5 3.5 0 0 1 7 0v2.5" fill="none" stroke="#fff" stroke-width="1.8"/><rect x="1.5" y="7" width="10" height="7.5" fill="#fff"/></svg>
<svg class="ic" style="left:1444px;top:506px" width="17" height="16" viewBox="0 0 17 16"><path d="M3 2.5l2 0l1.5 3l-1.5 1.5c0.8 1.8 2.2 3.2 4 4l1.5-1.5l3 1.5v2c0 1-1 1.5-2 1.5c-5 -0.5-9-4.5-9.5-9.5c0-1 0.5-2 1.5-2z" fill="#fff"/><path d="M9.5 3.5a4 4 0 0 1 3.5 3.5M9.5 0.8a6.5 6.5 0 0 1 6.2 6.2" fill="none" stroke="#fff" stroke-width="1.3"/></svg>
<svg class="ic" style="left:1444px;top:545px" width="17" height="16" viewBox="0 0 17 16"><path d="M2 0.5h13a1.5 1.5 0 0 1 1.5 1.5v9a1.5 1.5 0 0 1-1.5 1.5h-4.5l-2.5 3l-1-3h-5a1.5 1.5 0 0 1-1.5-1.5v-9a1.5 1.5 0 0 1 1.5-1.5z" fill="#fff"/><g fill="#5b8ec9"><circle cx="5" cy="4.5" r="1.3"/><circle cx="8.5" cy="4" r="1.4"/><circle cx="12" cy="4.5" r="1.3"/><path d="M2.8 9.5c0-2 1-2.8 2.2-2.8s2.2.8 2.2 2.8z"/><path d="M6.2 9.5c0-2.3 1-3.3 2.3-3.3s2.3 1 2.3 3.3z"/><path d="M9.8 9.5c0-2 1-2.8 2.2-2.8s2.2.8 2.2 2.8z"/></g></svg>
<svg class="ic" style="left:1444px;top:858px" width="17" height="14" viewBox="0 0 17 14"><path d="M0.5 0.5h14v10h-14z" fill="#fff"/><path d="M2.5 12h14.5v-9" fill="none" stroke="#fff" stroke-width="1.2"/><circle cx="4.5" cy="4" r="1.6" fill="#c59d8c"/><path d="M2 8.5c0-2 1-2.8 2.5-2.8s2.5 .8 2.5 2.8z" fill="#c59d8c"/><rect x="8" y="3" width="4" height="1.1" fill="#c59d8c"/><rect x="8" y="5.5" width="3" height="1.1" fill="#c59d8c"/></svg>
<div class="a" style="left:1444px;top:894px;width:17px;text-align:center;font-size:20px;font-weight:bold;color:#fff;-webkit-text-stroke:1px #8a8cd0;line-height:22px">1</div>
<svg class="ic" style="left:1444px;top:889px" width="18" height="8" viewBox="0 0 18 8"><path d="M5 7l-1-5M8 6l0-5M11 6l1.5-4.5M13.5 7l3-3" stroke="#f0b060" stroke-width="1.3" fill="none"/></svg>
<svg class="ic" style="left:1440px;top:969px" width="26" height="11" viewBox="0 0 26 11"><ellipse cx="8" cy="9" rx="7" ry="5" fill="#cfe6f5"/><ellipse cx="18" cy="8" rx="6" ry="4" fill="#dcecf7"/><rect x="9" y="2" width="3" height="3" fill="#f19a8f"/></svg>
<div class="badge" style="left:1455.5px;top:500px;width:15px;background:#f0523f;color:#fff">3</div>
<div class="badge" style="left:1455.5px;top:617px;width:15px;height:13px;border-radius:7px;background:#8f9499;color:#fff">1</div>
<div class="badge" style="left:1455.5px;top:656px;width:15px;background:#f0523f;color:#fff">1</div>
<div class="a" style="left:1464px;top:0;width:8px;height:7px;background:#6b6b6b"></div>
<div class="a" style="left:1472px;top:0;width:2px;height:16px;background:#000"></div>
<div class="a" style="left:1464px;top:972px;width:10px;height:8px;background:#000"></div>
</body></html>
